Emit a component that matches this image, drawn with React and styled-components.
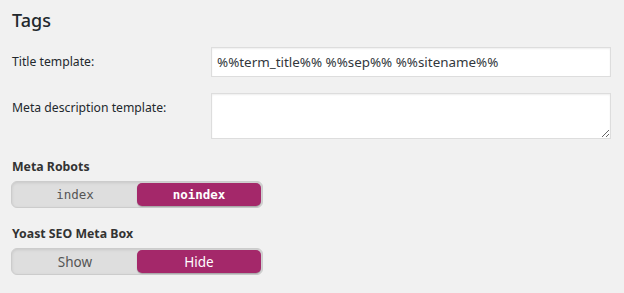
import styled, { createGlobalStyle } from "styled-components";

const GlobalStyle = createGlobalStyle`
    html, body {
        margin: 0;
        padding: 0;
        background: #f1f1f1;
    }
    body {
        font-family: "Noto Sans", "Open Sans", sans-serif;
        color: #444;
        font-size: 13px;
    }
`;

const fields = [
    { label: "Title template:", value: "%%term_title%% %%sep%% %%sitename%%", multiline: false },
    { label: "Meta description template:", value: "", multiline: true },
];

const toggles = [
    { title: "Meta Robots", options: ["index", "noindex"], active: 1, mono: true },
    { title: "Yoast SEO Meta Box", options: ["Show", "Hide"], active: 1, mono: false },
];

const App = () => {
    return (
        <Page>
            <GlobalStyle />
            <Heading>Tags</Heading>
            <FormTable>
                {fields.map((f) => (
                    <Row key={f.label}>
                        <Label>{f.label}</Label>
                        {f.multiline ? (
                            <TextArea defaultValue={f.value} />
                        ) : (
                            <TextInput type="text" defaultValue={f.value} />
                        )}
                    </Row>
                ))}
            </FormTable>
            {toggles.map((t) => (
                <ToggleGroup key={t.title}>
                    <ToggleTitle>{t.title}</ToggleTitle>
                    <Switch>
                        {t.options.map((opt, i) => (
                            <SwitchOption key={opt} $active={i === t.active} $mono={t.mono}>
                                {opt}
                            </SwitchOption>
                        ))}
                    </Switch>
                </ToggleGroup>
            ))}
        </Page>
    );
};

const Page = styled.div`
    width: 624px;
    height: 293px;
    box-sizing: border-box;
    padding: 8px 12px 0 12px;
    overflow: hidden;
`;

const Heading = styled.h2`
    font-size: 18px;
    font-weight: 500;
    color: #23282d;
    margin: 0 0 14px 0;
    line-height: 25px;
`;

const FormTable = styled.div`
    display: flex;
    flex-direction: column;
    gap: 16px;
    margin-bottom: 19px;
`;

const Row = styled.div`
    display: grid;
    grid-template-columns: 199px 400px;
    align-items: start;
`;

const Label = styled.label`
    padding-top: 5px;
    line-height: 20px;
    font-size: 12.2px;
    color: #23282d;
`;

const fieldBase = `
    box-sizing: border-box;
    width: 400px;
    border: 1px solid #ddd;
    box-shadow: inset 0 1px 2px rgba(0, 0, 0, 0.07);
    background: #fff;
    color: #32373c;
    font-family: "Noto Sans", "Open Sans", sans-serif;
    font-size: 13.4px;
    outline: none;
`;

const TextInput = styled.input`
    ${fieldBase}
    height: 30px;
    padding: 0 5px;
`;

const TextArea = styled.textarea`
    ${fieldBase}
    height: 46px;
    padding: 2px 6px;
    resize: vertical;
    display: block;
`;

const ToggleGroup = styled.div`
    display: flex;
    flex-direction: column;
    gap: 5px;
    margin-bottom: 17px;
`;

const ToggleTitle = styled.div`
    font-size: 12.3px;
    font-weight: 700;
    color: #333;
    line-height: 18px;
`;

const Switch = styled.div`
    box-sizing: border-box;
    width: 252px;
    height: 27px;
    margin-left: -1px;
    display: grid;
    grid-template-columns: 1fr 1fr;
    background: #dedede;
    border: 1px solid #ccc;
    border-radius: 6px;
    box-shadow: inset 0 1px 3px rgba(0, 0, 0, 0.1);
    padding: 1px;
`;

const SwitchOption = styled.div`
    display: flex;
    align-items: center;
    justify-content: center;
    border-radius: 5px;
    font-family: ${({ $mono }) => ($mono ? '"DejaVu Sans Mono", "Liberation Mono", monospace' : '"Noto Sans", "Open Sans", sans-serif')};
    font-size: ${({ $mono }) => ($mono ? "12.5px" : "13.5px")};
    font-weight: ${({ $active, $mono }) => ($active && $mono ? 700 : 400)};
    color: ${({ $active }) => ($active ? "#fff" : "#555")};
    background: ${({ $active }) => ($active ? "#a4286a" : "transparent")};
    box-shadow: ${({ $active }) => ($active ? "0 1px 1px rgba(0,0,0,0.25)" : "none")};
`;

export default App;
